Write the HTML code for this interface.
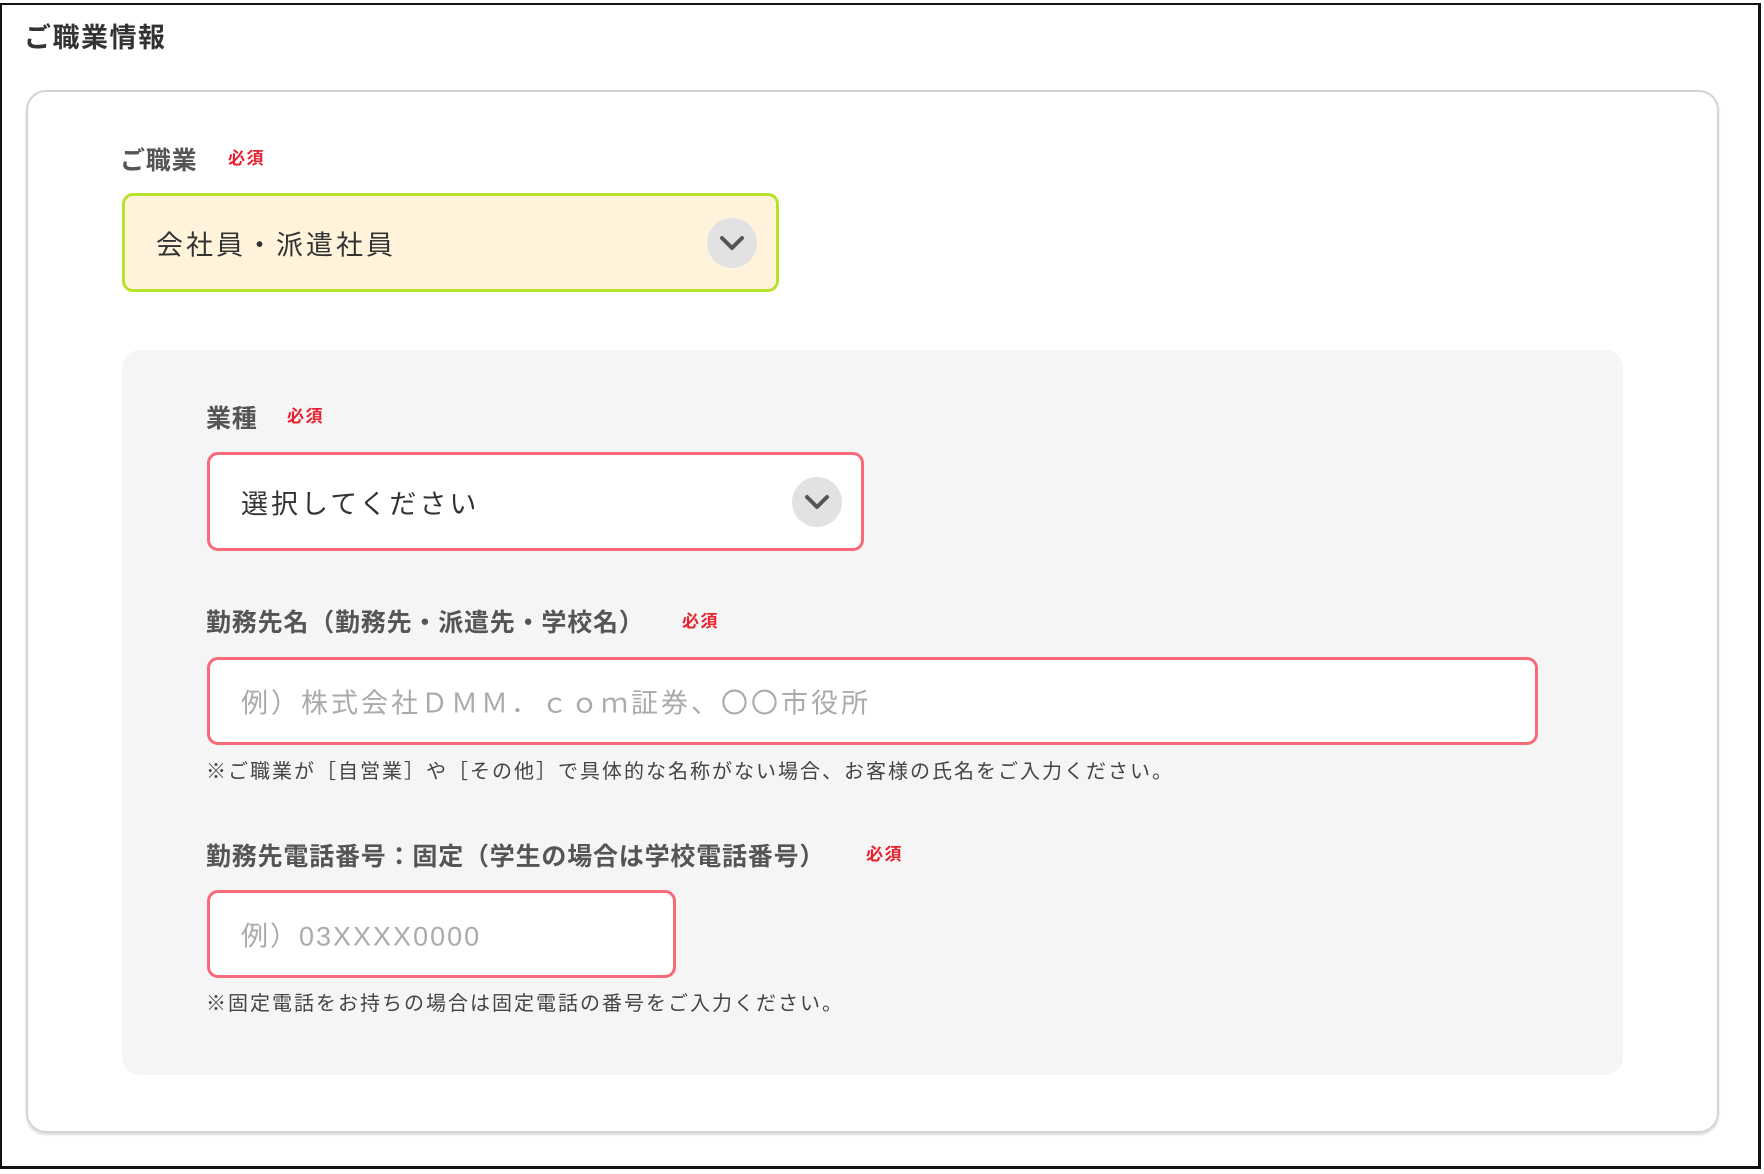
<!DOCTYPE html>
<html><head><meta charset="utf-8"><style>
*{margin:0;padding:0;box-sizing:border-box}
html,body{width:1764px;height:1174px;background:#fff;overflow:hidden}
body{font-family:"Liberation Sans","Noto Sans CJK JP",sans-serif;color:#333;position:relative}
.frame{position:absolute;left:0;top:3px;width:1761px;height:1166px;border:2px solid #111;border-right-width:3px;border-bottom-width:3px}
.abs{position:absolute;white-space:nowrap}
.title{left:24px;top:16px;font-size:27px;letter-spacing:1.5px;font-weight:bold;color:#333}
.box{position:absolute;left:26px;top:90px;width:1693px;height:1043px;border:2px solid #d4d4d4;border-radius:20px;box-shadow:0 2px 2px #ddd}
.panel{position:absolute;left:122px;top:350px;width:1501px;height:725px;background:#f5f5f5;border-radius:18px}
.lbl{font-size:25px;letter-spacing:0.8px;font-weight:bold;color:#555}
.req{font-size:17px;letter-spacing:1.5px;font-weight:bold;color:#e8212f}
.sel{position:absolute;border-radius:11px;border:3px solid}
.sel .t{position:absolute;left:31px;top:50%;transform:translateY(-50%);font-size:27px;letter-spacing:3px;color:#333}
.chev{position:absolute;width:50px;height:50px;border-radius:50%;background:#e2e2e2;top:50%;margin-top:-25px}
.chev svg{position:absolute;left:12px;top:13px}
.inp{position:absolute;background:#fff;border:3px solid #f76a78;border-radius:11px}
.ph{position:absolute;left:31px;top:50%;transform:translateY(-50%);font-size:27px;letter-spacing:3px;color:#aaa}
.note{font-size:20px;letter-spacing:2px;color:#444}
</style></head><body>
<div class="frame"></div>
<div class="abs title">ご職業情報</div>
<div class="box"></div>
<div class="abs lbl" style="left:120px;top:141px">ご職業</div>
<div class="abs req" style="left:228px;top:144px">必須</div>
<div class="sel" style="left:122px;top:193px;width:657px;height:99px;background:#fff3dc;border-color:#b6e22c">
<div class="t">会社員・派遣社員</div>
<div class="chev" style="left:582px"><svg width="26" height="24" viewBox="0 0 26 24"><path d="M3 7 L13 17 L23 7" fill="none" stroke="#555" stroke-width="4" stroke-linecap="round" stroke-linejoin="round"/></svg></div>
</div>
<div class="panel"></div>
<div class="abs lbl" style="left:206px;top:399px">業種</div>
<div class="abs req" style="left:287px;top:402px">必須</div>
<div class="sel" style="left:207px;top:452px;width:657px;height:99px;background:#fff;border-color:#f76a78">
<div class="t">選択してください</div>
<div class="chev" style="left:582px"><svg width="26" height="24" viewBox="0 0 26 24"><path d="M3 7 L13 17 L23 7" fill="none" stroke="#555" stroke-width="4" stroke-linecap="round" stroke-linejoin="round"/></svg></div>
</div>
<div class="abs lbl" style="left:206px;top:603px">勤務先名（勤務先・派遣先・学校名）</div>
<div class="abs req" style="left:682px;top:607px">必須</div>
<div class="inp" style="left:207px;top:657px;width:1331px;height:88px"><div class="ph">例）株式会社ＤＭＭ．ｃｏｍ証券、〇〇市役所</div></div>
<div class="abs note" style="left:206px;top:755px">※ご職業が［自営業］や［その他］で具体的な名称がない場合、お客様の氏名をご入力ください。</div>
<div class="abs lbl" style="left:206px;top:837px">勤務先電話番号：固定（学生の場合は学校電話番号）</div>
<div class="abs req" style="left:866px;top:840px">必須</div>
<div class="inp" style="left:207px;top:890px;width:469px;height:88px"><div class="ph" style="letter-spacing:2px">例）03XXXX0000</div></div>
<div class="abs note" style="left:206px;top:987px">※固定電話をお持ちの場合は固定電話の番号をご入力ください。</div>
</body></html>
